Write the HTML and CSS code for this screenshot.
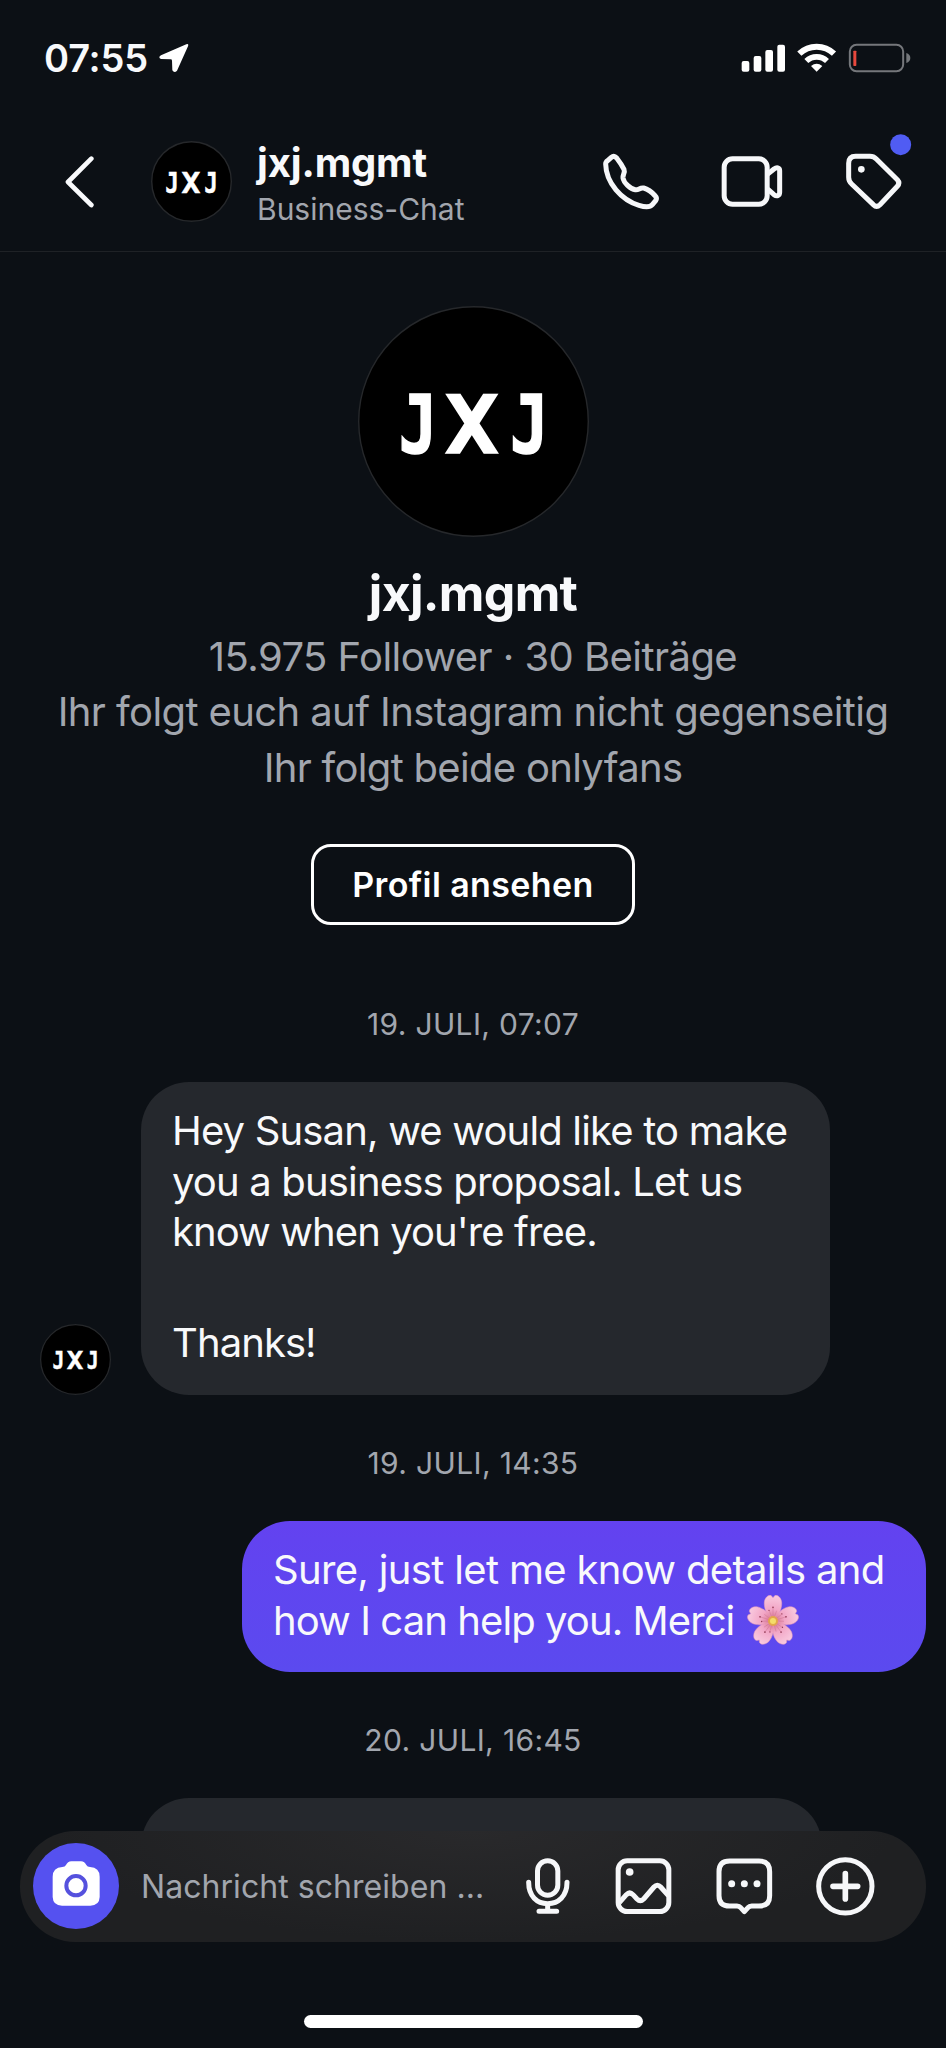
FILE: index.html
```html
<!DOCTYPE html>
<html lang="de">
<head>
<meta charset="utf-8">
<title>jxj.mgmt</title>
<link rel="stylesheet" href="styles.css">
</head>
<body>
<div class="screen">
  <div class="status">
    <span class="time">07:55</span>
    <svg class="locate" width="30" height="30" viewBox="476 131 90 90"><path d="M558 135Q566 132 563 141L530 214Q522 223 516 213L515 184Q515 180 511 180L482 179Q472 174 482 168Z" fill="#fff"/></svg>
    <svg class="signals" width="170" height="30" viewBox="542 129 510 90">
      <g fill="#fff"><rect x="544" y="183" width="23" height="32" rx="6"/><rect x="580" y="168" width="23" height="47" rx="6"/><rect x="615" y="150" width="23" height="65" rx="6"/><rect x="651" y="134" width="23" height="81" rx="6"/><path d="M769 215L752 198Q769 184 786 198Z"/></g>
      <g fill="none" stroke="#fff"><path d="M717 161A75 75 0 0 1 821 161" stroke-width="18"/><path d="M738 183A45 45 0 0 1 800 183" stroke-width="17"/></g>
      <rect x="868.500" y="134.500" width="160" height="79" rx="20" fill="none" stroke="#75777b" stroke-width="6"/>
      <path d="M1038 159Q1050 163 1050 174T1038 189Z" fill="#75777b"/><rect x="879" y="152" width="9" height="46" rx="2" fill="#e8483d"/>
    </svg>
  </div>
  <header class="header">
    <svg class="back" width="34" height="56" viewBox="195 461 102 168"><path d="M274 475L204 545L274 614" fill="none" stroke="#f9fafc" stroke-width="14" stroke-linecap="round" stroke-linejoin="round"/></svg>
    <svg class="logo avatar-head" viewBox="0 0 231 231"><circle cx="115.500" cy="115.500" r="113.500"/><text transform="translate(40.700 147.300) scale(.79 1)">J</text><text transform="translate(87 147.300) scale(1.1 1)">X</text><text transform="translate(152 147.300) scale(.79 1)">J</text></svg>
    <div class="who"><b>jxj.mgmt</b><span>Business-Chat</span></div>
    <svg class="actions" width="316" height="80" viewBox="125 396 948 240" fill="none" stroke="#f6f7f9" stroke-width="15" stroke-linecap="round" stroke-linejoin="round">
      <path d="M153 472Q161 465 169 474C176 483 186 498 191 508C195 519 187 522 188 534C190 548 210 567 225 569C235 571 238 562 250 564C262 567 277 579 285 588Q291 594 286 602L276 614C270 621 255 622 236 616C184 600 137 549 136 492Q136 486 142 482Z"/>
      <rect x="491.500" y="476.500" width="129" height="136" rx="25"/><path d="M624 521L641 507C649 501 658 502 658 512V577C658 588 649 590 641 584L624 569"/>
      <path d="M886 469H929Q940 469 948 477L1011 539Q1020 549 1011 559L959 614Q949 624 939 614L874 552Q865 544 865 532V490Q865 469 886 469Z"/>
      <circle cx="903" cy="508" r="10" fill="#f6f7f9" stroke="none"/><circle cx="1021" cy="434" r="31.500" fill="#505cf3" stroke="none"/>
    </svg>
  </header>
  <main class="thread">
    <section class="profile">
      <svg class="logo avatar-big" viewBox="0 0 231 231"><circle cx="115.500" cy="115.500" r="114.800"/><text transform="translate(40.700 147.300) scale(.79 1)">J</text><text transform="translate(87 147.300) scale(1.1 1)">X</text><text transform="translate(152 147.300) scale(.79 1)">J</text></svg>
      <h1>jxj.mgmt</h1>
      <p class="l1">15.975 Follower · 30 Beiträge</p>
      <p class="l2">Ihr folgt euch auf Instagram nicht gegenseitig</p>
      <p class="l3">Ihr folgt beide onlyfans</p>
      <button class="view">Profil ansehen</button>
    </section>
    <div class="date d1">19. JULI, 07:07</div>
    <div class="row">
      <svg class="logo avatar-msg" viewBox="0 0 231 231"><circle cx="115.500" cy="115.500" r="113.500"/><text transform="translate(40.700 147.300) scale(.79 1)">J</text><text transform="translate(87 147.300) scale(1.1 1)">X</text><text transform="translate(152 147.300) scale(.79 1)">J</text></svg>
      <div class="bubble in"><p>Hey Susan, we would like to make</p><p>you a business proposal. Let us</p><p class="tight">know when you're free.</p><p class="tight thanks">Thanks!</p></div>
    </div>
    <div class="date d2">19. JULI, 14:35</div>
    <div class="bubble out"><p class="sure">Sure, just let me know details and</p>
      <p class="tight merci">how I can help you. Merci
        <svg class="flower" width="52" height="52" viewBox="-78 -78 156 156">
          <defs>
            <radialGradient id="pt" gradientUnits="userSpaceOnUse" cx="0" cy="0" r="78"><stop offset=".15" stop-color="#dc7f9b"/><stop offset=".45" stop-color="#f2a6c6"/><stop offset="1" stop-color="#f9cbe0"/></radialGradient>
            <g id="petal"><path d="M0 0C-15-12-28-36-26-57C-24-70-14-80-5-76L0-70L5-76C14-80 24-70 26-57C28-36 15-12 0 0Z" fill="url(#pt)" stroke="#e79aba" stroke-width="1.500"/><path d="M0-12V-40M-4-12L-11-31M4-12L11-31" stroke="#cf7795" stroke-width="1.500"/><g fill="#8f3650"><circle cy="-41" r="2.500"/><circle cx="-12" cy="-32" r="2"/></g></g>
          </defs>
          <use href="#petal"/><use href="#petal" transform="rotate(72)"/><use href="#petal" transform="rotate(144)"/><use href="#petal" transform="rotate(216)"/><use href="#petal" transform="rotate(288)"/>
          <circle r="15" fill="#e3a64c"/><circle r="9" fill="#f4dc69"/>
        </svg></p></div>
    <div class="date d3">20. JULI, 16:45</div>
    <div class="bubble next"></div>
  </main>
  <footer class="composer">
    <svg class="camera" width="86" height="86" viewBox="98 190 258 258"><circle cx="227" cy="319" r="129" fill="#5551f0"/><path d="M186 262Q194 262 197 256Q202 246 213 245H242Q253 246 258 256Q261 262 269 262Q298 264 298 291V352Q297 378 270 378H185Q158 378 157 352V291Q157 264 186 262Z" fill="#fff"/><circle cx="227" cy="318" r="29" fill="none" stroke="#5551de" stroke-width="12"/></svg>
    <span class="placeholder">Nachricht schreiben ...</span>
    <svg class="tools" width="352" height="62" viewBox="134 226 1056 186" fill="none" stroke="#f6f7f9" stroke-width="15" stroke-linecap="round" stroke-linejoin="round">
      <rect x="171.500" y="243.500" width="61" height="103" rx="30.500"/><path d="M145 308C145 350 170 372 202 372S260 350 260 308M202 375V395M176 395H229"/>
      <rect x="413.500" y="243.500" width="152" height="152" rx="27"/><path d="M417 369L438 345Q448 335 458 345L470 358Q480 368 490 358L521 322Q531 311 541 322L564 348" stroke-linecap="butt"/><circle cx="448" cy="277" r="11.500" fill="#f6f7f9" stroke="none"/>
      <path d="M748 244H836Q868 244 868 276V348Q868 379 836 379H814Q807 379 803 384L792 396L781 384Q777 379 770 379H748Q716 379 716 348V276Q716 244 748 244Z"/><g fill="#f6f7f9" stroke="none"><circle cx="754" cy="312" r="10.500"/><circle cx="792" cy="312" r="10.500"/><circle cx="830" cy="312" r="10.500"/></g>
      <circle cx="1095" cy="320" r="80"/><path d="M1058 320H1132M1095 282V358" stroke-width="17"/>
    </svg>
  </footer>
  <div class="home"></div>
</div>
</body>
</html>
```
FILE: styles.css
```css
* { box-sizing: border-box; margin: 0; padding: 0; }
body { background: #0c1015; color: #f8f9fb; font-family: Inter, "Noto Sans", sans-serif; }
svg { display: block; flex: none; }
.logo circle { fill: #000; stroke: #26282b; stroke-width: 1.4px; }
.logo text { font-family: "DejaVu Sans Mono", monospace; font-weight: 700; font-size: 81px; fill: #fff; stroke: #fff; stroke-width: 1.5px; }
.screen { position: relative; width: 946px; height: 2048px; overflow: hidden; display: flex; flex-direction: column; background: #0c1015; }

.status { height: 116px; padding: 0 35px 0 44px; display: flex; align-items: center; }
.time { font-size: 38px; font-weight: 600; line-height: 46px; letter-spacing: -0.2px; width: 115px; white-space: nowrap; }
.signals { margin-left: auto; }

.header { height: 136px; border-bottom: 1px solid #1f2226; display: flex; padding-top: 16px; }
.back { margin: 22px 0 0 65px; }
.avatar-head { width: 81px; height: 81px; margin: 9px 0 0 52px; }
.avatar-head circle, .avatar-msg circle { stroke-width: 4px; }
.who { margin-left: 25px; width: 220px; white-space: nowrap; display: flex; flex-direction: column; }
.who b { font-size: 40px; font-weight: 700; line-height: 60px; letter-spacing: -0.15px; padding-top: 1px; }
.who span { font-size: 30px; line-height: 34px; margin-top: -1px; color: #a2a6ae; }
.actions { margin-left: auto; margin-right: 28px; }

.thread { display: flex; flex-direction: column; white-space: nowrap; }
.profile { display: flex; flex-direction: column; align-items: center; padding-top: 54px; height: 674px; }
.avatar-big { width: 231px; height: 231px; }
.profile h1 { font-size: 50px; font-weight: 700; line-height: 60px; margin-top: 26px; letter-spacing: -0.7px; }
.profile p { font-size: 40px; line-height: 55.400px; color: #a2a6ae; }
.profile .l1 { margin-top: 6px; letter-spacing: -0.56px; }
.profile .l2 { letter-spacing: -0.6px; }
.profile .l3 { letter-spacing: -0.7px; }
.view { margin-top: 49px; width: 324px; height: 81px; flex: none; border: 3px solid #fff; border-radius: 20px; background: none; color: #fff; font: 600 34px Inter, sans-serif; letter-spacing: 0.4px; }

.date { text-align: center; font-size: 30px; letter-spacing: 0.35px; color: #a2a6ae; line-height: 36px; }
.d1 { padding-top: 80px; height: 156px; }
.row { display: flex; align-items: flex-end; }
.avatar-msg { width: 71px; height: 71px; margin-left: 40px; margin-right: 30px; }
.bubble { border-radius: 48px; font-size: 40px; line-height: 50.600px; letter-spacing: -0.83px; }
.tight { letter-spacing: -0.92px; }
.sure { letter-spacing: -0.67px; }
.in { width: 689px; height: 313px; background: #25282d; padding: 24px 31px; }
.thanks { margin-top: 60px; }
.d2 { padding-top: 50px; height: 126px; }
.out { width: 684px; height: 151px; margin-left: 242px; padding: 24px 31px; background: linear-gradient(#6342f0, #5b4aef); }
.merci { display: flex; align-items: center; gap: 13px; }
.flower { margin-top: -1px; }
.d3 { padding-top: 50px; height: 126px; }
.next { width: 681px; height: 110px; margin-left: 141px; background: #25282d; }

.composer { position: absolute; left: 20px; top: 1831px; width: 906px; height: 111px; border-radius: 56px; background: radial-gradient(ellipse 420px 110px at 50% 0, #29292b, #1f2022); display: flex; align-items: center; padding-left: 13px; }
.camera { margin-top: -1px; }
.placeholder { margin-left: 22px; font-size: 32px; line-height: 40px; color: #a2a6ae; letter-spacing: 0.05px; width: 360px; white-space: nowrap; }
.tools { margin-left: 24px; margin-top: -1px; }
.home { position: absolute; left: 304px; top: 2015px; width: 339px; height: 13px; border-radius: 7px; background: #fff; }
```
